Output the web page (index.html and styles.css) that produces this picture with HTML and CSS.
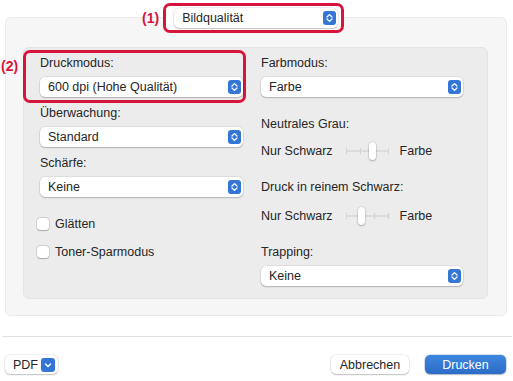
FILE: index.html
```html
<!DOCTYPE html>
<html lang="de">
<head>
    <meta charset="UTF-8">
    <meta name="viewport" content="width=device-width, initial-scale=1.0">
    <title>Bildqualität</title>
    <link rel="stylesheet" href="styles.css">
</head>
<body>
    <div class="top">
        <span class="callout">(1)</span>
        <div class="mark mark-top">
            <div class="select select-top">
                <span>Bildqualität</span>
                <svg class="stepper" width="13" height="14" viewBox="0 0 13 14"><rect width="13" height="14" rx="3" fill="#3476d6"/><path d="M4 6 L6.5 3.6 L9 6 M4 8 L6.5 10.4 L9 8" fill="none" stroke="#fff" stroke-width="1.3" stroke-linecap="round" stroke-linejoin="round"/></svg>
            </div>
        </div>
    </div>

    <div class="sheet">
        <div class="panel">
            <div class="col">
                <div class="field mark mark-field">
                    <span class="callout callout-side">(2)</span>
                    <div class="label">Druckmodus:</div>
                    <div class="select">
                        <span>600 dpi (Hohe Qualität)</span>
                        <svg class="stepper" width="13" height="14" viewBox="0 0 13 14"><rect width="13" height="14" rx="3" fill="#3476d6"/><path d="M4 6 L6.5 3.6 L9 6 M4 8 L6.5 10.4 L9 8" fill="none" stroke="#fff" stroke-width="1.3" stroke-linecap="round" stroke-linejoin="round"/></svg>
                    </div>
                </div>
                <div class="field">
                    <div class="label">Überwachung:</div>
                    <div class="select">
                        <span>Standard</span>
                        <svg class="stepper" width="13" height="14" viewBox="0 0 13 14"><rect width="13" height="14" rx="3" fill="#3476d6"/><path d="M4 6 L6.5 3.6 L9 6 M4 8 L6.5 10.4 L9 8" fill="none" stroke="#fff" stroke-width="1.3" stroke-linecap="round" stroke-linejoin="round"/></svg>
                    </div>
                </div>
                <div class="field">
                    <div class="label">Schärfe:</div>
                    <div class="select">
                        <span>Keine</span>
                        <svg class="stepper" width="13" height="14" viewBox="0 0 13 14"><rect width="13" height="14" rx="3" fill="#3476d6"/><path d="M4 6 L6.5 3.6 L9 6 M4 8 L6.5 10.4 L9 8" fill="none" stroke="#fff" stroke-width="1.3" stroke-linecap="round" stroke-linejoin="round"/></svg>
                    </div>
                </div>
                <label class="check check-first"><span class="box"></span>Glätten</label>
                <label class="check check-second"><span class="box"></span>Toner-Sparmodus</label>
            </div>

            <div class="col">
                <div class="field">
                    <div class="label">Farbmodus:</div>
                    <div class="select">
                        <span>Farbe</span>
                        <svg class="stepper" width="13" height="14" viewBox="0 0 13 14"><rect width="13" height="14" rx="3" fill="#3476d6"/><path d="M4 6 L6.5 3.6 L9 6 M4 8 L6.5 10.4 L9 8" fill="none" stroke="#fff" stroke-width="1.3" stroke-linecap="round" stroke-linejoin="round"/></svg>
                    </div>
                </div>
                <div class="label label-gap">Neutrales Grau:</div>
                <div class="slider-row slider-first">
                    <span>Nur Schwarz</span>
                    <div class="slider">
                        <i class="tick" style="left: 0px"></i>
                        <i class="tick" style="left: 14px"></i>
                        <i class="tick" style="left: 28px"></i>
                        <i class="tick" style="left: 42px"></i>
                        <b class="thumb" style="left: 23px"></b>
                    </div>
                    <span>Farbe</span>
                </div>
                <div class="label label-gap2">Druck in reinem Schwarz:</div>
                <div class="slider-row slider-second">
                    <span>Nur Schwarz</span>
                    <div class="slider">
                        <i class="tick" style="left: 0px"></i>
                        <i class="tick" style="left: 14px"></i>
                        <i class="tick" style="left: 28px"></i>
                        <i class="tick" style="left: 42px"></i>
                        <b class="thumb" style="left: 12px"></b>
                    </div>
                    <span>Farbe</span>
                </div>
                <div class="field field-last">
                    <div class="label">Trapping:</div>
                    <div class="select">
                        <span>Keine</span>
                        <svg class="stepper" width="13" height="14" viewBox="0 0 13 14"><rect width="13" height="14" rx="3" fill="#3476d6"/><path d="M4 6 L6.5 3.6 L9 6 M4 8 L6.5 10.4 L9 8" fill="none" stroke="#fff" stroke-width="1.3" stroke-linecap="round" stroke-linejoin="round"/></svg>
                    </div>
                </div>
            </div>
        </div>
    </div>

    <div class="divider"></div>

    <div class="footer">
        <div class="btn btn-pdf">
            <span>PDF</span>
            <svg width="14" height="14" viewBox="0 0 14 14"><rect width="14" height="14" rx="3" fill="#3476d6"/><path d="M4.5 6 L7 8.4 L9.5 6" fill="none" stroke="#fff" stroke-width="1.4" stroke-linecap="round" stroke-linejoin="round"/></svg>
        </div>
        <div class="actions">
            <div class="btn btn-cancel">Abbrechen</div>
            <div class="btn btn-primary">Drucken</div>
        </div>
    </div>
</body>
</html>
```

FILE: styles.css
```css
*{
    margin: 0;
    padding: 0;
    box-sizing: border-box;
}

body{
    width: 513px;
    height: 381px;
    background-color: #ffffff;
    font-family: "Liberation Sans", Arial, sans-serif;
    font-size: 12.5px;
    color: #262626;
    overflow: hidden;
}

/* red markers from the manual */
.mark{
    border: 3px solid #d7143c;
    border-radius: 7px;
}
.callout{
    font-weight: 700;
    font-size: 14px;
    color: #d7143c;
    line-height: 16px;
}

.top{
    position: relative;
    z-index: 2;
    height: 36px;
    display: flex;
    align-items: center;
    gap: 4px;
    padding-left: 142px;
}
.mark-top{
    width: 181px;
    height: 30px;
    margin-top: -1px;
    display: flex;
    align-items: center;
    padding: 0 3px 0 8px;
    background-color: #ffffff;
}
.select-top{
    flex: 1;
}

.sheet{
    margin: -19px 6px 0 5px;
    height: 299px;
    background-color: #f6f6f6;
    border: 1px solid #ebebeb;
    border-radius: 6px;
    padding: 29px 18px 16px 17px;
}

.panel{
    height: 252px;
    background-color: #ececec;
    border: 1px solid #e3e3e3;
    border-radius: 6px;
    padding: 7px 0 0 16px;
    display: grid;
    grid-template-columns: 203px 202px;
    column-gap: 18px;
    align-items: start;
}

.col{
    display: flex;
    flex-direction: column;
}

.label{
    line-height: 16px;
    height: 16px;
    white-space: nowrap;
}
.field .label{
    margin-bottom: 6px;
}
.field + .field{
    margin-top: 8px;
}

.mark-field{
    position: relative;
    margin: -5px -3px -6px -17px;
    padding: 2px 0 3px 14px;
}
.callout-side{
    position: absolute;
    left: -25px;
    top: 5px;
}

.select{
    height: 20px;
    background-color: #ffffff;
    border-radius: 5px;
    box-shadow: 0 0 0 0.5px rgba(0, 0, 0, 0.12), 0 1px 1.5px rgba(0, 0, 0, 0.2);
    display: flex;
    align-items: center;
    justify-content: space-between;
    padding: 0 2px 0 8px;
    white-space: nowrap;
}
.stepper{
    display: block;
}

.check{
    display: flex;
    align-items: center;
    gap: 6px;
    height: 16px;
    line-height: 16px;
    margin-left: -3px;
}
.check-first{
    margin-top: 19px;
}
.check-second{
    margin-top: 12px;
}
.box{
    width: 12px;
    height: 12px;
    background-color: #ffffff;
    border-radius: 3px;
    box-shadow: 0 0 0 0.5px rgba(0, 0, 0, 0.2), 0 0.5px 1px rgba(0, 0, 0, 0.2);
}

.label-gap{
    margin-top: 19px;
}
.label-gap2{
    margin-top: 18px;
}

.slider-row{
    height: 20px;
    display: flex;
    align-items: center;
    white-space: nowrap;
}
.slider-first{
    margin-top: 9px;
}
.slider-second{
    margin-top: 11px;
}
.field-last{
    margin-top: 18px;
}

.slider{
    position: relative;
    width: 43px;
    height: 20px;
    margin: 0 11px 0 13px;
}
.slider::before{
    content: "";
    position: absolute;
    left: 0;
    right: 0;
    top: 9px;
    height: 2px;
    background-color: #dcdcdc;
    border-radius: 1px;
}
.tick{
    position: absolute;
    top: 7px;
    width: 1px;
    height: 6px;
    background-color: #d2d2d2;
}
.thumb{
    position: absolute;
    top: 1px;
    width: 7px;
    height: 18px;
    background-color: #ffffff;
    border-radius: 4px;
    box-shadow: 0 0 0 0.5px rgba(0, 0, 0, 0.12), 0 1px 2px rgba(0, 0, 0, 0.25);
}

.divider{
    margin: 20px 1px 0 2px;
    height: 1px;
    background-color: #e2e2e2;
}

.footer{
    display: flex;
    justify-content: space-between;
    align-items: center;
    margin-top: 18px;
    padding: 0 7px 0 5px;
}
.actions{
    display: flex;
    gap: 16px;
}
.btn{
    height: 19px;
    border-radius: 5px;
    background-color: #ffffff;
    box-shadow: 0 0 0 0.5px rgba(0, 0, 0, 0.12), 0 1px 1.5px rgba(0, 0, 0, 0.2);
    display: flex;
    align-items: center;
    justify-content: center;
    white-space: nowrap;
}
.btn-pdf{
    width: 53px;
    justify-content: space-between;
    padding: 0 3px 0 8px;
}
.btn-pdf svg{
    display: block;
}
.btn-cancel{
    width: 78px;
}
.btn-primary{
    width: 81px;
    color: #ffffff;
    background: linear-gradient(#3f86de, #2b6cc6);
    box-shadow: 0 0 0 0.5px rgba(0, 60, 160, 0.3), 0 1px 1.5px rgba(0, 0, 0, 0.2);
}
```
